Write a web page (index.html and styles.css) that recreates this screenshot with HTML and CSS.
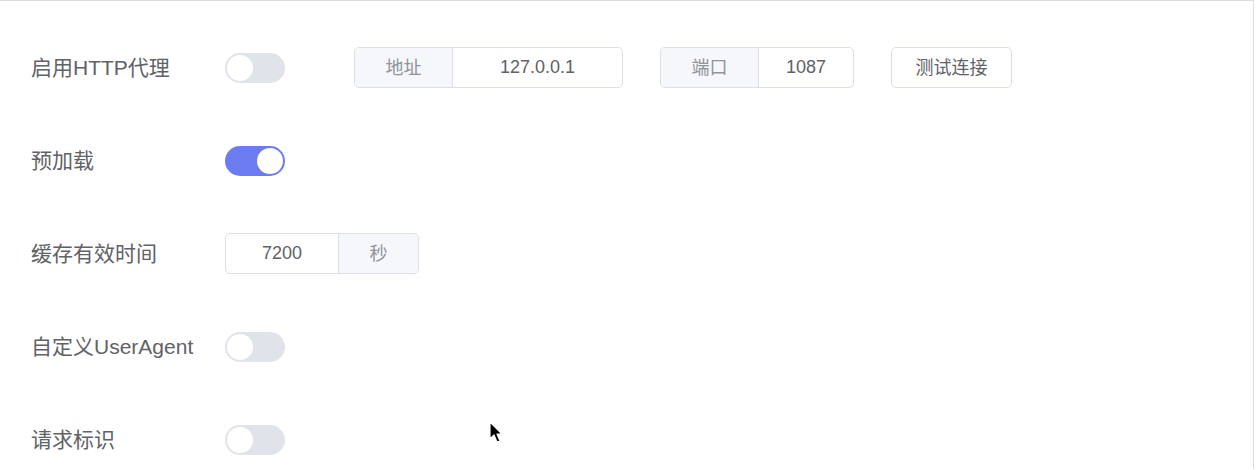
FILE: index.html
```html
<!DOCTYPE html>
<html lang="zh-CN">
<head>
    <meta charset="UTF-8">
    <meta name="viewport" content="width=device-width, initial-scale=1.0">
    <title>设置</title>
    <link rel="stylesheet" href="styles.css">
</head>
<body>
    <div class="settings">
        <div class="row">
            <div class="label">启用HTTP代理</div>
            <div class="switch"><span class="knob"></span></div>
            <div class="input-group group-addr">
                <div class="addon">地址</div>
                <input class="field" type="text" value="127.0.0.1">
            </div>
            <div class="input-group group-port">
                <div class="addon">端口</div>
                <input class="field" type="text" value="1087">
            </div>
            <button class="btn">测试连接</button>
        </div>

        <div class="row">
            <div class="label">预加载</div>
            <div class="switch on"><span class="knob"></span></div>
        </div>

        <div class="row">
            <div class="label">缓存有效时间</div>
            <div class="input-group group-cache">
                <input class="field" type="text" value="7200">
                <div class="addon addon-right">秒</div>
            </div>
        </div>

        <div class="row">
            <div class="label">自定义UserAgent</div>
            <div class="switch"><span class="knob"></span></div>
        </div>

        <div class="row">
            <div class="label">请求标识</div>
            <div class="switch"><span class="knob"></span></div>
        </div>

        <!-- mouse pointer caught in the capture -->
        <svg class="cursor" width="14" height="24" viewBox="0 0 14 24">
            <path d="M1 1 L1 18 L5 14 L8 21 L11 20 L8 13 L13 13 Z" fill="#000" stroke="#fff" stroke-width="1.2" stroke-linejoin="round"/>
        </svg>
    </div>
</body>
</html>
```

FILE: styles.css
```css
body {
    margin: 0;
    padding: 0;
    background-color: #fff;
    font-family: "Liberation Sans", "Noto Sans CJK SC", sans-serif;
    color: #606266;
}

.settings {
    position: relative;
    width: 1254px;
    height: 469px;
    box-sizing: border-box;
    border-top: 1px solid #dcdcdc;
    border-right: 1px solid #dcdcdc;
    padding: 46px 0 0 31px;
    overflow: hidden;
}

.row {
    display: flex;
    align-items: center;
    height: 41px;
    margin-bottom: 52px;
}

.label {
    width: 194px;
    font-size: 21px;
    line-height: 24px;
    color: #606266;
    white-space: nowrap;
}

.switch {
    position: relative;
    width: 60px;
    height: 30px;
    border-radius: 15px;
    background-color: #e0e3ea;
    flex-shrink: 0;
}

.switch .knob {
    position: absolute;
    top: 2px;
    left: 2px;
    width: 26px;
    height: 26px;
    border-radius: 50%;
    background-color: #fff;
}

.switch.on {
    background-color: #6b7cf0;
}

.switch.on .knob {
    left: 32px;
}

.input-group {
    display: flex;
    height: 41px;
    box-sizing: border-box;
    border: 1px solid #dcdfe6;
    border-radius: 5px;
    overflow: hidden;
    background-color: #fff;
}

.group-addr {
    margin-left: 69px;
    width: 269px;
}

.group-port {
    margin-left: 37px;
    width: 194px;
}

.group-cache {
    width: 194px;
}

.addon {
    width: 97px;
    flex-shrink: 0;
    display: flex;
    align-items: center;
    justify-content: center;
    background-color: #f5f7fa;
    border-right: 1px solid #dcdfe6;
    color: #909399;
    font-size: 18px;
    line-height: 22px;
}

.addon-right {
    width: 79px;
    border-right: none;
    border-left: 1px solid #dcdfe6;
}

.field {
    flex: 1;
    min-width: 0;
    border: none;
    outline: none;
    padding: 0;
    margin: 0;
    text-align: center;
    font-family: "Liberation Sans", "Noto Sans CJK SC", sans-serif;
    font-size: 18px;
    color: #606266;
    background: transparent;
}

.btn {
    margin-left: 37px;
    width: 121px;
    height: 41px;
    border: 1px solid #dcdfe6;
    border-radius: 5px;
    background-color: #fff;
    font-family: "Liberation Sans", "Noto Sans CJK SC", sans-serif;
    font-size: 18px;
    line-height: 22px;
    color: #606266;
    padding: 0;
}

.cursor {
    position: absolute;
    left: 489px;
    top: 420px;
}
```
